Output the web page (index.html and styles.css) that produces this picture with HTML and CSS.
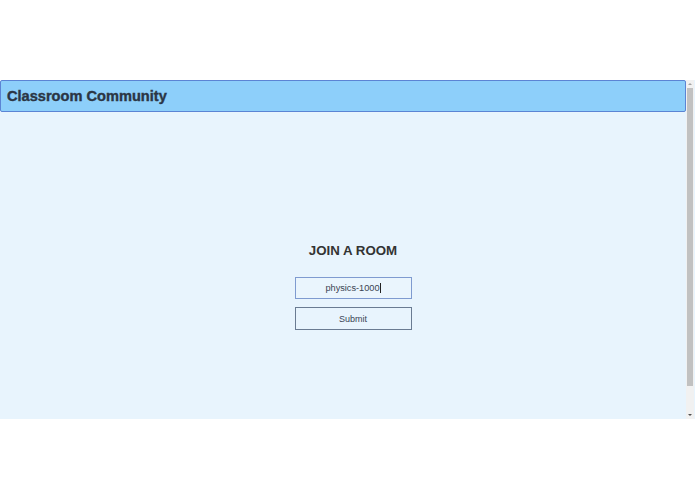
FILE: index.html
```html
<!DOCTYPE html>
<html lang="en">
<head>
<meta charset="utf-8">
<title>Classroom Community</title>
<link rel="stylesheet" href="styles.css">
</head>
<body>
<div class="page">
  <div class="frame">
    <div class="app">
      <header class="topbar">
        <h1 class="brand">Classroom Community</h1>
      </header>
      <main class="content">
        <h2 class="title">JOIN A ROOM</h2>
        <form class="join-form" onsubmit="return false">
          <div class="field"><span class="field-text">physics-1000</span><span class="caret"></span></div>
          <button class="submit" type="submit">Submit</button>
        </form>
      </main>
    </div>
    <div class="scrollbar">
      <div class="arrow arrow-up"></div>
      <div class="track"><div class="thumb"></div></div>
      <div class="arrow arrow-down"></div>
    </div>
  </div>
</div>
</body>
</html>
```

FILE: styles.css
```css
html, body {
  margin: 0;
  padding: 0;
  background: #ffffff;
  font-family: "Liberation Sans", Arial, sans-serif;
}

.page {
  padding-top: 80px;
  width: 695px;
}

.frame {
  display: flex;
  height: 339px;
  background: #e8f4fd;
}

.app {
  flex: 1;
  display: flex;
  flex-direction: column;
  min-width: 0;
}

.topbar {
  height: 30px;
  background: #8dcffa;
  border: 1px solid #5b84d4;
  border-radius: 2px;
  display: flex;
  align-items: center;
  padding-left: 6px;
}

.brand {
  margin: 0;
  font-size: 14.6px;
  font-weight: bold;
  color: #2b3645;
  -webkit-text-stroke: 0.4px #2b3645;
  letter-spacing: 0;
}

.content {
  flex: 1;
  display: flex;
  flex-direction: column;
  align-items: center;
  padding-top: 131px;
  padding-left: 20px;
}

.title {
  margin: 0;
  font-size: 13.3px;
  line-height: 15px;
  font-weight: bold;
  color: #333333;
}

.join-form {
  margin-top: 19px;
  display: flex;
  flex-direction: column;
  gap: 8px;
}

.field {
  box-sizing: border-box;
  width: 117px;
  height: 22px;
  border: 1px solid #7f9bd0;
  background: #eaf5fd;
  display: flex;
  align-items: center;
  justify-content: center;
  font-size: 9.2px;
  color: #3a4352;
}

.caret {
  display: inline-block;
  width: 1px;
  height: 10px;
  background: #222;
}

.submit {
  box-sizing: border-box;
  width: 117px;
  height: 23px;
  border: 1px solid #6a7b92;
  background: #e8f4fd;
  font-family: "Liberation Sans", Arial, sans-serif;
  font-size: 9px;
  color: #3a4456;
  padding: 0;
  border-radius: 0;
}

.scrollbar {
  width: 8px;
  margin-right: 1px;
  background: #f1f1f1;
  display: flex;
  flex-direction: column;
}

.arrow {
  height: 8px;
  position: relative;
}

.arrow-up::after,
.arrow-down::after {
  content: "";
  position: absolute;
  left: 2px;
  border-left: 2px solid transparent;
  border-right: 2px solid transparent;
}

.arrow-up::after {
  top: 3px;
  border-bottom: 2px solid #a3a3a3;
}

.arrow-down::after {
  top: 3px;
  border-top: 2px solid #505050;
}

.track {
  flex: 1;
  padding: 0 1px;
}

.thumb {
  height: 298px;
  background: #c1c1c1;
}
```
